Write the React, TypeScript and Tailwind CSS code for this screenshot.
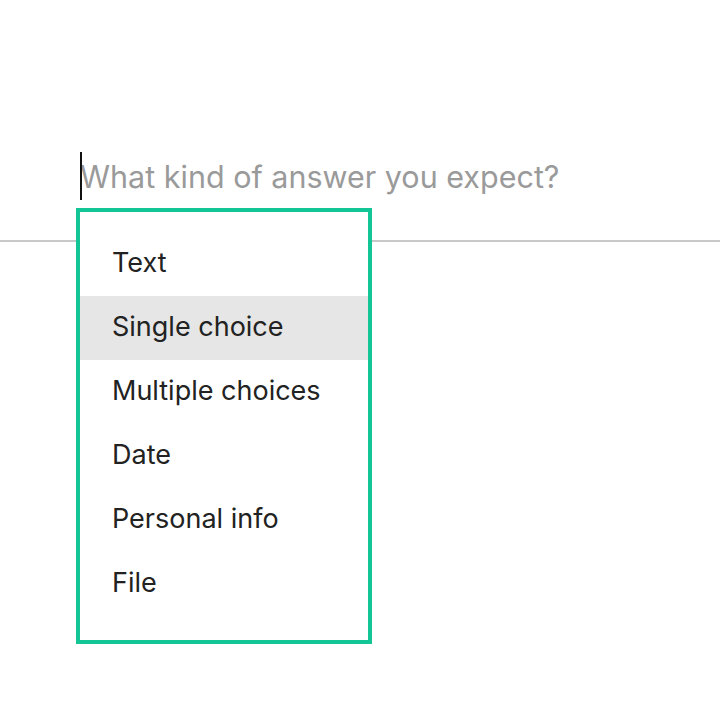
import { FC } from 'react';

const options = ['Text', 'Single choice', 'Multiple choices', 'Date', 'Personal info', 'File'];

const App: FC = () => {
  const active = 'Single choice';

  return (
    <main
      className="min-h-screen w-full bg-white pt-[140px]"
      style={{ fontFamily: 'Inter, "Noto Sans", sans-serif' }}
    >
      <div className="relative h-[102px] border-b-2 border-[#c8c8c8]">
        <div className="relative ml-[80px] flex h-[76px] items-center pb-[2px]">
          <span className="absolute left-0 top-[12px] h-[48px] w-[2px] bg-[#111]" />
          <span className="text-[30.5px] leading-none text-[#9a9a9a]">
            What kind of answer you expect?
          </span>
        </div>

        <ul className="absolute left-[76px] top-[68px] w-[296px] border-4 border-[#12c795] bg-white pb-6 pt-5">
          {options.map((option) => (
            <li
              key={option}
              className={`flex h-16 items-center pb-1 pl-8 text-[27px] leading-none text-[#222] ${
                option === active ? 'bg-[#e6e6e6]' : ''
              }`}
            >
              {option}
            </li>
          ))}
        </ul>
      </div>
    </main>
  );
};

export default App;
